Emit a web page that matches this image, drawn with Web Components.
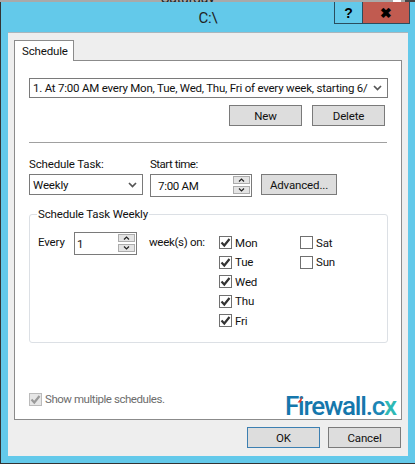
<!DOCTYPE html>
<html><head><meta charset="utf-8"><style>
html,body{margin:0;padding:0;width:415px;height:464px;overflow:hidden;background:#63c9ea;font:11.5px Roboto,"Liberation Sans",Arial,sans-serif;letter-spacing:-.15px;color:#111}
</style></head><body>
<win-dialog></win-dialog>
<script>
function def(name,css,html){customElements.define(name,class extends HTMLElement{constructor(){super();this.attachShadow({mode:'open'}).innerHTML='<style>'+css+'</style>'+html}})}
const chev='<svg width="9" height="6" viewBox="0 0 9 6"><path d="M1 1l3.5 3.5L8 1" fill="none" stroke="#555" stroke-width="1.7"/></svg>';
def('w-btn',':host{display:flex;box-sizing:border-box;width:73px;height:21px;background:#dddddd;border:1px solid #7a7a7a;align-items:center;justify-content:center}:host([def]){border-color:#3c7fb1}:host([w]){width:76px}','<slot></slot>');
def('w-combo',':host{display:flex;box-sizing:border-box;height:21px;background:#fff;border:1px solid #7a7a7a;align-items:center;padding:0 5px 0 3px;justify-content:space-between;overflow:hidden}.t{white-space:nowrap;overflow:hidden;flex:1}svg{flex:none;margin-left:4px}','<span class="t"><slot></slot></span>'+chev);
def('w-spin',':host{display:flex;box-sizing:border-box;background:#fff;border:1px solid #7a7a7a;align-items:center;justify-content:space-between}.t{padding-left:var(--pad,7px)}.b{display:flex;flex-direction:column;gap:2px;padding:1px 1px 0 0;align-self:flex-start}.b i{display:flex;align-items:center;justify-content:center;width:17px;height:8px;background:#e4e4e4;border:1px solid #acacac;box-sizing:border-box}',
'<span class="t"><slot></slot></span><span class="b"><i><svg width="7" height="4" viewBox="0 0 7 4"><path d="M1 3.5l2.5-2.5L6 3.5" fill="none" stroke="#222" stroke-width="1.2"/></svg></i><i><svg width="7" height="4" viewBox="0 0 7 4"><path d="M1 .5l2.5 2.5L6 .5" fill="none" stroke="#222" stroke-width="1.2"/></svg></i></span>');
def('w-check',':host{display:flex;align-items:center;gap:3px;height:19.5px;white-space:nowrap}.b{box-sizing:border-box;width:13px;height:13px;border:1px solid #707070;background:#fff;display:flex;align-items:center;justify-content:center}svg{display:none}:host([on]) svg{display:block}:host([off]){color:#6d6d6d;letter-spacing:-.45px}:host([off]) .b{border-color:#bbb;background:#e6e6e6}:host([off]) path{stroke:#9a9a9a}',
'<span class="b"><svg width="11" height="11" viewBox="0 0 11 11"><path d="M1.5 5.5l2.8 3L9.5 2" fill="none" stroke="#333" stroke-width="2.2"/></svg></span><span><slot></slot></span>');
def('w-group',':host{display:block;position:relative;box-sizing:border-box;border:1px solid #dce0e5;border-radius:3px}.l{position:absolute;left:7px;top:-8px;background:#fff;padding:0 1px;line-height:15px}','<span class="l"><slot name="legend"></slot></span><slot></slot>');
def('fw-logo',':host{display:block;font:500 26px/26px Roboto,"Liberation Sans",sans-serif;letter-spacing:-1.2px;color:#1577ac;position:relative;white-space:nowrap;margin-right:1px}.c{color:#1b86b5}.x{color:#2fb9b5}.d{position:absolute;left:12px;top:3px}',
'<span>Firewall.</span><span class="c">c</span><span class="x">x</span><svg class="d" width="6" height="7" viewBox="0 0 6 7"><path d="M0.5 6.5L5.5 .5 4 6.5z" fill="#e23b27"/></svg>');
def('win-dialog',`:host{display:flex;flex-direction:column;box-sizing:border-box;width:415px;height:464px;background:#63c9ea;border-left:1px solid #333;border-bottom:1px solid #333}
.strip{height:2px;background:#a9a9a9;overflow:hidden;display:flex;position:relative;margin-left:-1px}
.strip b{font:400 14px/8px Roboto,sans-serif;color:#222;margin:-6px 0 0 161px}
.strip u{position:absolute;top:0;height:2px}
.title{height:30px;box-sizing:border-box;display:flex;position:relative;justify-content:center;padding-top:4px;font-size:15px;line-height:24px;color:#222}
.caps{position:absolute;right:5px;top:0;display:flex;height:22px;border:1px solid #2a4d5e;border-top:0;box-sizing:border-box}
.caps span{display:flex;align-items:center;justify-content:center;font:900 14px "Liberation Sans",sans-serif;color:#000;box-sizing:border-box}
.q{width:28px;border-right:1px solid #2a4d5e}.x{width:46px;background:#c15b50}
.panel{flex:1;margin:0 7px 7px 7px;background:#eee;border-top:1px solid #a9b6bd;padding:7px 6px 0;display:flex;flex-direction:column;min-height:0}
.tab{align-self:flex-start;width:60px;height:21px;box-sizing:border-box;background:#fff;border:1px solid #8b8b8b;border-bottom:0;padding:2px 0 0 7px;margin-bottom:-1px;position:relative;z-index:1;line-height:16px}
.page{height:360px;box-sizing:border-box;background:#fff;border:1px solid #8b8b8b;padding:17px 14px 0;display:flex;flex-direction:column;position:relative}
.row{display:flex}
.btns{justify-content:flex-end;gap:10px;padding-right:2px;margin-top:7px}
hr{height:1px;border:0;background:#a0a0a0;margin:16px 0 0;width:358px}
.labels{margin-top:12px;height:19px;align-items:center;padding-bottom:2px;box-sizing:border-box}
.controls{align-items:flex-start}
.group{margin-top:17px;height:129px}
.g{display:flex;padding:17px 0 0 8px}
.days{display:grid;grid-template-columns:81px 60px;grid-auto-rows:19.5px;margin:1px 0 0 10px}
.foot{justify-content:flex-end;gap:8px;margin-top:7px;padding-right:1px}
.bottom{margin-top:auto;display:flex;justify-content:space-between;align-items:flex-end;margin-right:-10px}
.bottom w-check{margin-bottom:10px}
`,`<div class="strip"><b>Saturday</b><u style="left:393px;width:8px;background:#fff"></u><u style="left:405px;width:10px;background:#444"></u></div>
<div class="title">C:\\<div class="caps"><span class="q">?</span><span class="x">✖</span></div></div>
<div class="panel"><div class="tab">Schedule</div>
<div class="page">
<w-combo style="width:359px;height:20px;letter-spacing:-.22px">1. At 7:00 AM every Mon, Tue, Wed, Thu, Fri of every week, starting 6/</w-combo>
<div class="row btns"><w-btn>New</w-btn><w-btn>Delete</w-btn></div>
<hr>
<div class="row labels"><span style="width:121px">Schedule Task:</span><span style="letter-spacing:-.5px">Start time:</span></div>
<div class="row controls"><w-combo style="width:114px">Weekly</w-combo><w-spin style="width:102px;height:23px;margin-left:7px;letter-spacing:-.3px">7:00 AM</w-spin><w-btn w style="margin-left:9px">Advanced...</w-btn></div>
<w-group class="group" style="width:359px"><span slot="legend">Schedule Task Weekly</span>
<div class="g"><span style="width:36px;line-height:20px">Every</span><w-spin style="width:63px;height:23px;--pad:2px">1</w-spin><span style="margin-left:12px;width:60px;line-height:20px;white-space:nowrap;letter-spacing:-.3px">week(s) on:</span>
<div class="days"><w-check on>Mon</w-check><w-check>Sat</w-check><w-check on>Tue</w-check><w-check>Sun</w-check><w-check on>Wed</w-check><span></span><w-check on>Thu</w-check><span></span><w-check on>Fri</w-check></div></div>
</w-group>
<div class="bottom"><w-check on off>Show multiple schedules.</w-check><fw-logo></fw-logo></div>
</div>
<div class="row foot"><w-btn def>OK</w-btn><w-btn>Cancel</w-btn></div>
</div>`);
</script></body></html>
